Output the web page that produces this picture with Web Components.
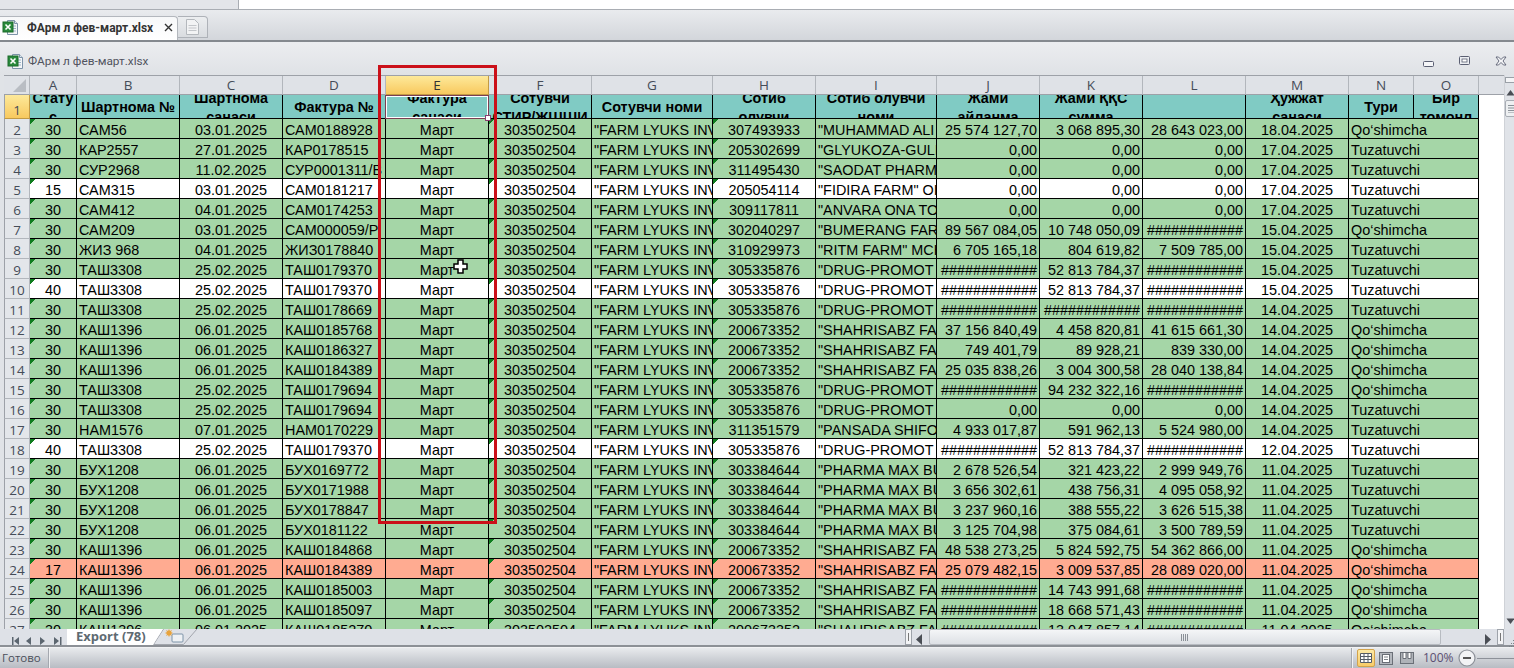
<!DOCTYPE html>
<html lang="ru"><head><meta charset="utf-8"><title>ФАрм л фев-март.xlsx</title>
<style>html,body{margin:0;padding:0;overflow:hidden;background:#e3e5e9}</style></head>
<body><x-app></x-app>
<script>
function comp(name, css, html, setup){
  customElements.define(name, class extends HTMLElement{
    constructor(){super();const r=this.attachShadow({mode:'open'});r.innerHTML='<style>'+css+'</style>'+(typeof html==='function'?html(this):html);if(setup)setup(r,this);}
  });
}
comp('x-excel-icon',':host{display:block;width:17px;height:17px}svg{display:block}',
`<svg width="17" height="17" viewBox="0 0 17 17"><path d="M5.5 1.5h7l3 3v11h-10z" fill="#f4f6f8" stroke="#7d93a8"/><path d="M12.5 1.5v3h3" fill="#dde6ee" stroke="#7d93a8"/><path d="M10 7h4M10 9.500h4M10 12h4" stroke="#9cb4c8"/><rect x="1" y="3" width="10" height="10" fill="#2a8a3c" stroke="#1a6a2a"/><path d="M3.500 5.500l5 5M8.500 5.500l-5 5" stroke="#fff" stroke-width="1.600"/></svg>`);

comp('x-top-strip',':host{display:flex;height:10px;box-sizing:border-box;border-bottom:1px solid #a9adb3}.l{width:238px;background:#e3e5e9;border-right:1px solid #a9adb3}.r{flex:1;background:#fff}','<div class="l"></div><div class="r"></div>');

comp('x-tab-strip',`:host{display:flex;height:30px;box-sizing:border-box;padding-top:6px;background:linear-gradient(#e9ebee,#d3d6db);font:700 12px Roboto,sans-serif;color:#333}
.a{width:178px;box-sizing:border-box;background:linear-gradient(#f7f8f9,#fff);border:1px solid #b3b7bd;border-left:0;border-bottom:0;border-radius:0 4px 0 0;display:flex;align-items:center;padding:0 0 2px 2px;gap:8px;position:relative}
.a span{white-space:nowrap;margin-top:1px}.x{position:absolute;left:164px;top:6px}
.b{width:30px;margin-bottom:2px;box-sizing:border-box;border:1px solid #aeb2b8;border-left:0;border-radius:0 4px 0 0;background:linear-gradient(#eceef0,#d9dce0);display:flex;align-items:center;justify-content:center}`,
`<div class="a"><x-excel-icon></x-excel-icon><span>ФАрм л фев-март.xlsx</span><svg class="x" width="9" height="9" viewBox="0 0 9 9"><path d="M1 1l7 7M8 1l-7 7" stroke="#333" stroke-width="1.400"/></svg></div>
<div class="b"><svg width="13" height="16" viewBox="0 0 13 16"><path d="M.5.5h8l4 4v11H.5z" fill="#f2f3f4" stroke="#b4b8bd"/><path d="M2.500 6.500h8M2.500 9h8M2.500 11.500h8" stroke="#c3c6ca" stroke-width="1.200"/></svg></div>`);

comp('x-tab-sep',':host{display:block;height:2px;background:#85898f}','');

comp('x-doc-title',`:host{display:flex;height:33px;box-sizing:border-box;align-items:center;padding:5px 7px 0 7px;gap:4px;background:linear-gradient(#ecedf0,#dfe2e6);font:11.800px Roboto,sans-serif;color:#51535e}
.s{flex:1}.c{display:flex;align-items:center;gap:25px}`,
`<x-excel-icon></x-excel-icon><span>ФАрм л фев-март.xlsx</span><div class="s"></div>
<div class="c"><svg width="11" height="6" viewBox="0 0 11 6" style="margin-top:6px"><rect x=".5" y=".5" width="10" height="5" rx="1" fill="#f5f6f8" stroke="#5a5f72"/></svg>
<svg width="11" height="10" viewBox="0 0 11 10"><rect x=".5" y=".5" width="10" height="8" rx="1" fill="#eceef2" stroke="#5a5f72"/><rect x="3" y="3" width="5" height="3" fill="#fff" stroke="#5a5f72" stroke-width=".8"/></svg>
<svg width="12" height="10" viewBox="0 0 12 10"><path d="M1 1h2.500L6 3.500 8.500 1H11L8 5l3 4H8.500L6 6.500 3.500 9H1l3-4z" fill="#f5f6f8" stroke="#5a5f72" stroke-width=".9"/></svg></div>`);

const HDR=['Стату\nс','Шартнома №','Шартнома\nсанаси','Фактура №','Фактура\nсанаси','Сотувчи\nСТИР/ЖШШИ','Сотувчи номи','Сотиб\nолувчи','Сотиб олувчи\nноми','Жами\nайланма','Жами ҚҚС\nсумма','','Ҳужжат\nсанаси','Тури','Бир\nтомонл'];
const H='############',Q='Qo‘shimcha',T='Tuzatuvchi';
const DR='"DRUG-PROMOT',SH='"SHAHRISABZ FA',PH='"PHARMA MAX BU';
const D=[
[30,'САМ56','03.01.2025','САМ0188928','307493933','"MUHAMMAD ALI M','25 574 127,70','3 068 895,30','28 643 023,00','18.04.2025',Q,'g'],
[30,'КАР2557','27.01.2025','КАР0178515','205302699','"GLYUKOZA-GULI','0,00','0,00','0,00','17.04.2025',T,'g'],
[30,'СУР2968','11.02.2025','СУР0001311/В','311495430','"SAODAT PHARM','0,00','0,00','0,00','17.04.2025',T,'g'],
[15,'САМ315','03.01.2025','САМ0181217','205054114','"FIDIRA FARM" OI','0,00','0,00','0,00','17.04.2025',T,'w'],
[30,'САМ412','04.01.2025','САМ0174253','309117811','"ANVARA ONA TO','0,00','0,00','0,00','17.04.2025',T,'g'],
[30,'САМ209','03.01.2025','САМ000059/Р','302040297','"BUMERANG FAR','89 567 084,05','10 748 050,09',H,'15.04.2025',Q,'g'],
[30,'ЖИЗ 968','04.01.2025','ЖИЗ0178840','310929973','"RITM FARM" MCH','6 705 165,18','804 619,82','7 509 785,00','15.04.2025',T,'g'],
[30,'ТАШ3308','25.02.2025','ТАШ0179370','305335876',DR,H,'52 813 784,37',H,'15.04.2025',T,'g'],
[40,'ТАШ3308','25.02.2025','ТАШ0179370','305335876',DR,H,'52 813 784,37',H,'15.04.2025',T,'w'],
[30,'ТАШ3308','25.02.2025','ТАШ0178669','305335876',DR,H,H,H,'14.04.2025',T,'g'],
[30,'КАШ1396','06.01.2025','КАШ0185768','200673352',SH,'37 156 840,49','4 458 820,81','41 615 661,30','14.04.2025',Q,'g'],
[30,'КАШ1396','06.01.2025','КАШ0186327','200673352',SH,'749 401,79','89 928,21','839 330,00','14.04.2025',Q,'g'],
[30,'КАШ1396','06.01.2025','КАШ0184389','200673352',SH,'25 035 838,26','3 004 300,58','28 040 138,84','14.04.2025',Q,'g'],
[30,'ТАШ3308','25.02.2025','ТАШ0179694','305335876',DR,H,'94 232 322,16',H,'14.04.2025',Q,'g'],
[30,'ТАШ3308','25.02.2025','ТАШ0179694','305335876',DR,'0,00','0,00','0,00','14.04.2025',T,'g'],
[30,'НАМ1576','07.01.2025','НАМ0170229','311351579','"PANSADA SHIFO','4 933 017,87','591 962,13','5 524 980,00','14.04.2025',T,'g'],
[40,'ТАШ3308','25.02.2025','ТАШ0179370','305335876',DR,H,'52 813 784,37',H,'12.04.2025',T,'w'],
[30,'БУХ1208','06.01.2025','БУХ0169772','303384644',PH,'2 678 526,54','321 423,22','2 999 949,76','11.04.2025',T,'g'],
[30,'БУХ1208','06.01.2025','БУХ0171988','303384644',PH,'3 656 302,61','438 756,31','4 095 058,92','11.04.2025',T,'g'],
[30,'БУХ1208','06.01.2025','БУХ0178847','303384644',PH,'3 237 960,16','388 555,22','3 626 515,38','11.04.2025',T,'g'],
[30,'БУХ1208','06.01.2025','БУХ0181122','303384644',PH,'3 125 704,98','375 084,61','3 500 789,59','11.04.2025',T,'g'],
[30,'КАШ1396','06.01.2025','КАШ0184868','200673352',SH,'48 538 273,25','5 824 592,75','54 362 866,00','11.04.2025',Q,'g'],
[17,'КАШ1396','06.01.2025','КАШ0184389','200673352',SH,'25 079 482,15','3 009 537,85','28 089 020,00','11.04.2025',Q,'s'],
[30,'КАШ1396','06.01.2025','КАШ0185003','200673352',SH,H,'14 743 991,68',H,'11.04.2025',Q,'g'],
[30,'КАШ1396','06.01.2025','КАШ0185097','200673352',SH,H,'18 668 571,43',H,'11.04.2025',Q,'g'],
[30,'КАШ1396','06.01.2025','КАШ0185270','200673352',SH,H,'13 047 857,14',H,'11.04.2025',Q,'g']
];
const esc=s=>String(s).replace(/&/g,'&amp;').replace(/</g,'&lt;');
function sheetHtml(){
  let h='<div class="r ch"><i class="corner"><svg width="13" height="13" viewBox="0 0 13 13"><path d="M13 0v13H0z" fill="#b9bdc3"/></svg></i>';
  'ABCDEFGHIJKLMNO'.split('').forEach(c=>h+=`<b class="${c==='E'?'on':''}">${c}</b>`);
  h+='<b class="fill"></b></div><div class="r r1"><i class="rh on">1</i>';
  HDR.forEach(t=>h+=`<div class="c h"><span>${esc(t)}</span></div>`);
  h+='<div class="blank"></div></div>';
  D.forEach((d,i)=>{
    const [st,ct,dt,inv,tin,nm,j,k,l,m,n,col]=d;
    const num=v=>`<div class="c n${v===H?' hash':''}">${v}</div>`;
    h+=`<div class="r d ${col}"><i class="rh">${i+2}</i>`+
    `<div class="c m t">${st}</div><div class="c">${ct}</div><div class="c m">${dt}</div><div class="c">${inv}</div><div class="c m">Март</div>`+
    `<div class="c m t">303502504</div><div class="c">"FARM LYUKS INV</div><div class="c m t">${tin}</div><div class="c">${esc(nm)}</div>`+
    num(j)+num(k)+num(l)+`<div class="c m">${m}</div><div class="c sp">${n}</div><div class="blank"></div></div>`;
  });
  return `<div class="g">${h}
  <div class="sel"></div><div class="handle"></div>
  <svg class="cur" width="15" height="15" viewBox="0 0 15 15"><path d="M5 1h5v4h4v5h-4v4H5v-4H1V5h4z" fill="#fff" stroke="#000" stroke-width="1.500"/></svg>
  </div>
  <div class="sb"><div class="split"></div><svg width="9" height="7" viewBox="0 0 9 7" class="up"><path d="M.5 6.500L4.500 1l4 5.500z" fill="#4a4e55"/></svg><div class="th"><svg width="8" height="8" viewBox="0 0 8 8"><path d="M1 .5h7M1 3h7M1 5.500h7M1 8h7" stroke="#8a9097"/></svg></div><div class="sp2"></div><svg width="9" height="7" viewBox="0 0 9 7" class="dn"><path d="M.5.500h8L4.500 6z" fill="#4a4e55"/></svg></div>`;
}
comp('x-sheet',`:host{display:flex;height:554px;box-sizing:border-box;padding-left:4px;background:#e0e3e7;--cols:26px 47px 103px 103px 103px 103px 103px 121px 103px 121px 103px 103px 103px 103px 65px 65px 1fr;font:14.400px "Liberation Sans",Arial,sans-serif;color:#000;overflow:hidden}
.g{flex:1;position:relative;overflow:hidden;background:#fff;box-shadow:inset 1px 0 0 #9da1a8}
.r{display:grid;grid-template-columns:var(--cols)}
.ch{height:20px;background:#dfe2e7;border-top:1px solid #9da1a8;box-sizing:border-box;font:13.500px "Open Sans",sans-serif;color:#454c58}
.ch b{font-weight:400;text-align:center;line-height:19px;box-sizing:border-box;height:19px;border-right:1px solid #b2b6bc;border-bottom:1px solid #9da1a8}
.ch b.on{background:linear-gradient(#fde99a,#f8c95f);border-right-color:#c29a44;border-bottom-color:#c29a44;color:#333}
.ch b.fill{border-right:0}
.corner{display:flex;align-items:flex-end;justify-content:flex-end;padding:0 3px 2px 0;box-sizing:border-box;height:19px;border-right:1px solid #b2b6bc;border-bottom:1px solid #9da1a8}
.rh{font:13.500px "Open Sans",sans-serif;font-style:normal;color:#454c58;background:#e3e6ea;text-align:center;box-sizing:border-box;border-right:1px solid #b2b6bc;border-bottom:1px solid #b2b6bc;border-left:1px solid #9da1a8;display:flex;align-items:flex-end;justify-content:center;line-height:16px}
.rh.on{background:linear-gradient(#fde99a,#f8c95f);border-right-color:#c29a44;border-bottom-color:#c29a44}
.r1{height:24px}
.d{height:20px}
.c{box-sizing:border-box;border-right:1px solid #000;border-bottom:1px solid #000;white-space:nowrap;overflow:hidden;padding:1px 2px 0;line-height:20px;min-width:0}
.h{font-weight:700;display:flex;align-items:center;justify-content:center;padding:2px 0 0;white-space:pre;text-align:center;line-height:19px}
.h span{display:block;flex:none}
.n{text-align:right}.n.hash{text-align:left;padding-left:4px}
.m{text-align:center}
.r1 .c{background-color:#80cbc4}
.d.g{background:#a5d6a7}.d.w{background:#fff}.d.s{background:#ffab91}
.d .rh{background:#e3e6ea}
.blank{background:#fff}
.t{background-image:linear-gradient(135deg,#0f7d1e 3.600px,transparent 3.800px);background-repeat:no-repeat;background-size:6px 6px}
.sp{grid-column:span 2}
.sel{position:absolute;left:381px;top:20px;width:104px;height:24px;box-sizing:border-box;border:1px solid #7a3f52;box-shadow:inset 0 0 0 1px #fff}
.handle{position:absolute;left:481px;top:40px;width:6px;height:6px;background:#fff;border:1px solid #8a3f70;box-sizing:border-box}
.cur{position:absolute;left:449px;top:184px}
.sb{width:9px;background:#e0e3e8;position:relative;display:flex;flex-direction:column;align-items:flex-start;overflow:hidden;border-left:1px solid #cfd2d7;box-sizing:content-box}
.split{width:14px;height:6px;margin-top:2px;background:#f4f5f7;border:1px solid #9aa0a7;box-sizing:border-box}
.up{margin:6px 0 0 1px}.dn{margin:0 0 4px 1px}
.th{margin-top:4px;width:20px;height:17px;box-sizing:border-box;border:1px solid #a8adb4;background:#eef0f2;border-radius:2px;padding:4px 0 0 1px}
.th svg{display:block}
.sp2{flex:1}`,sheetHtml);

comp('x-sheet-bar',`:host{display:flex;height:16px;background:#dee1e7;align-items:stretch;color:#5e6a72;position:relative}
.nav{width:67px;flex:none;padding:3px 0 0 12px;box-sizing:border-box}
.tab{width:96px;flex:none;position:relative;z-index:1;clip-path:polygon(0 0,100% 0,89.500% 100%,0 100%);background:#fff;font:700 13px "Open Sans",sans-serif;line-height:15px;padding-left:9px;box-sizing:border-box;white-space:nowrap}
.new{width:44px;flex:none;margin-left:-10px}
.new svg{display:block}
.gap{width:708px;flex:none}
.split{width:7px;flex:none;background:#f3f4f6;border:1px solid #9ea3aa;box-sizing:border-box;display:flex;justify-content:center;align-items:center;margin-right:3px}
.split i{width:1px;height:8px;background:#777;display:block}
.arr{flex:none;width:14px;padding-top:2px}
.thumb{width:512px;flex:none;box-sizing:border-box;background:linear-gradient(#f4f5f7,#dde0e5);border:1px solid #b7bbc1;border-radius:2px;display:flex;justify-content:center;align-items:center}
.rest{width:44px;flex:none}.arr2{width:12px;flex:none;padding-top:2px}
.box{width:7px;flex:none;background:#f3f4f6;border:1px solid #9ea3aa;box-sizing:border-box;display:flex;justify-content:center;align-items:center}
.box i{width:1px;height:8px;background:#777;display:block}
.dots{flex:1;padding:5px 0 0 4px}`,
`<div class="nav"><svg width="50" height="10" viewBox="0 0 50 10"><g fill="#5c6670"><path d="M0 1h1.500v8H0zM7 1v8L2 5zM19 1v8l-5-4zM28 1v8l5-4zM42 1v8l5-4zM48 1h1.500v8H48z"/></g></svg></div>
<div class="tab">Export (78)</div>
<div class="new"><svg width="44" height="16" viewBox="0 0 44 16"><path d="M10.500 0L.5 15.500h30L44 0" fill="none" stroke="#a2a6ad"/><rect x="19" y="5" width="11" height="8" rx="1" fill="#eef1f4" stroke="#7d93a8"/><path d="M16 0l1 2 2-1-1 2 2 1-2 1 1 2-2-1-1 2-1-2-2 1 1-2-2-1 2-1-1-2 2 1z" fill="#e8a33c"/></svg></div>
<div class="gap"></div>
<div class="split"><i></i></div>
<div class="arr"><svg width="7" height="11" viewBox="0 0 7 11"><path d="M7 0v11L1 5.500z" fill="#4a4e55"/></svg></div>
<div class="thumb"><svg width="8" height="8" viewBox="0 0 8 8"><path d="M.5 1v7M2.500 1v7M4.500 1v7M6.500 1v7" stroke="#8a9097"/></svg></div>
<div class="rest"></div>
<div class="arr2"><svg width="6" height="11" viewBox="0 0 6 11"><path d="M0 0v11l6-5.500z" fill="#4a4e55"/></svg></div>
<div class="box"><i></i></div>
<div class="dots"><svg width="7" height="9" viewBox="0 0 7 9"><path d="M5 1h1v1H5zM3 4h1v1H3zM5 4h1v1H5zM1 7h1v1H1zM3 7h1v1H3zM5 7h1v1H5z" fill="#7d838a"/></svg></div>`);

comp('x-status-sep',':host{display:block;height:3px;background:linear-gradient(#8c9096 66%,#f1f2f4 66%)}','');

comp('x-status-bar',`:host{display:flex;height:20px;box-sizing:border-box;align-items:center;background:linear-gradient(#e8eaed,#b8bcc3);font:11.500px "Open Sans",sans-serif;color:#4a4f5a}
.t{padding:0 0 2px 2px;width:46px;flex:none;box-sizing:content-box}.v{width:1px;height:20px;background:#a4a8af;box-shadow:1px 0 0 #f0f1f3;flex:none}
.s{flex:1}.sep{margin-right:5px}
.btn{width:18px;height:18px;display:flex;align-items:center;justify-content:center;box-sizing:border-box;flex:none}
.on{background:linear-gradient(#fde9a4,#f9cc68);border:1px solid #d3a34c;border-radius:2px}
.pct{margin-left:9px;color:#5b4f72;width:33px;flex:none;font-size:12px;padding-bottom:1px}
.sl{display:flex;align-items:center;width:37px;flex:none;overflow:hidden}
.sl i{flex:1;height:1px;background:#8d9199;display:block;box-shadow:0 1px 0 #eee}`,
`<div class="t">Готово</div><div class="v"></div><div class="s"></div><div class="v sep"></div>
<div class="btn on"><svg width="12" height="10" viewBox="0 0 12 10"><path d="M.5.500h11v9H.5zM.5 3.500h11M.5 6.500h11M4 .500v9M8 .500v9" fill="#fff" stroke="#555c66"/></svg></div>
<div class="btn" style="margin-left:2px"><svg width="14" height="13" viewBox="0 0 14 13"><rect x=".5" y=".5" width="13" height="12" fill="#b4b8be" stroke="#6a6f77"/><rect x="3.500" y="2.500" width="7" height="8" fill="#fff" stroke="#6a6f77"/><path d="M5 5h4M5 7.500h4" stroke="#7d838a"/></svg></div>
<div class="btn" style="margin-left:5px;width:14px"><svg width="14" height="12" viewBox="0 0 14 12"><rect x=".5" y=".5" width="13" height="11" fill="#aeb2b8" stroke="#6a6f77"/><path d="M3 .500h3v6H3zM8 .500h3v6H8z" fill="#fff" stroke="#6a6f77"/></svg></div>
<div class="pct">100%</div>
<svg width="20" height="20" viewBox="0 0 20 20" style="flex:none;margin-left:1px"><circle cx="10" cy="10" r="8" fill="#f2f3f5" stroke="#8d9199" stroke-width="1.200"/><path d="M6 10h8" stroke="#555" stroke-width="2"/></svg>
<div class="sl"><i></i></div>`);

comp('x-app',':host{display:flex;flex-direction:column;width:1514px;height:668px;overflow:hidden;position:relative}.red{position:absolute;left:378px;top:65px;width:119px;height:459px;box-sizing:border-box;border:3px solid #cb1019;pointer-events:none}',
`<x-top-strip></x-top-strip><x-tab-strip></x-tab-strip><x-tab-sep></x-tab-sep><x-doc-title></x-doc-title><x-sheet></x-sheet><x-sheet-bar></x-sheet-bar><x-status-sep></x-status-sep><x-status-bar></x-status-bar><div class="red"></div>`);
</script></body></html>
